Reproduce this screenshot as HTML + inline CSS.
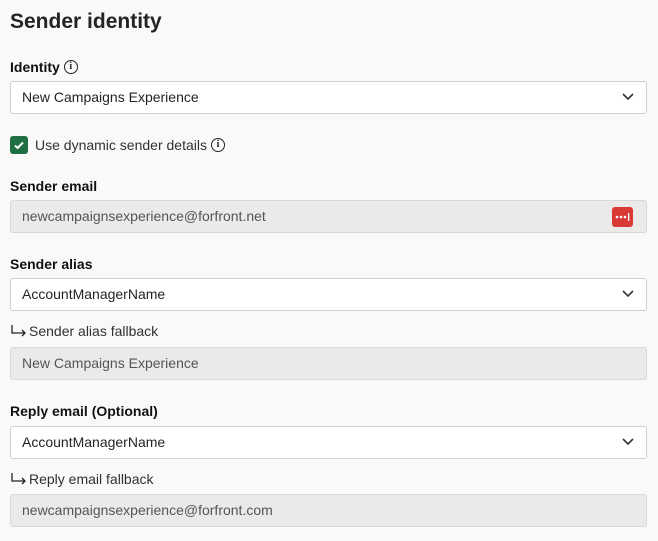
<!DOCTYPE html>
<html><head><style>
*{box-sizing:border-box;margin:0;padding:0}
body{width:658px;height:541px;background:#faf9f8;font-family:"Liberation Sans",sans-serif;color:#201f1e;position:relative;overflow:hidden}
.a{position:absolute}
h1{position:absolute;left:10px;top:10px;font-size:21px;font-weight:bold;color:#252423}
.lbl{position:absolute;left:10px;font-size:14px;font-weight:bold;color:#111;line-height:16px;display:flex;align-items:center}
.box{position:absolute;left:10px;width:637px;height:33px;border:1px solid #d2d0ce;border-radius:3px;background:#fff;font-size:14px;padding-left:11px;line-height:31px;color:#252423}
.dis{background:#ebeae9;color:#555;border-color:#dad8d6}
.chev{position:absolute;right:12px;top:11px}
.sub{position:absolute;left:10px;font-size:14px;color:#323130;line-height:16px;display:flex;align-items:center}
.info{display:inline-block;width:14px;height:14px;border:1.4px solid #222;border-radius:50%;font-size:10px;text-align:center;line-height:11px;font-weight:bold;margin-left:4px;font-family:"Liberation Serif",serif;color:#222}
</style></head><body>
<h1>Sender identity</h1>
<div class="lbl" style="top:59px">Identity<span class="info">i</span></div>
<div class="box" style="top:81px">New Campaigns Experience<svg class="chev" width="12" height="8" viewBox="0 0 12 8"><path d="M1 1l5 5 5-5" fill="none" stroke="#333" stroke-width="1.6"/></svg></div>
<div class="a" style="left:10px;top:136px;width:18px;height:18px;background:#1f6f43;border-radius:3px"><svg width="18" height="18" viewBox="0 0 18 18"><path d="M5 9.5l2.6 2.5L13 6.5" fill="none" stroke="#fff" stroke-width="2"/></svg></div>
<div class="sub" style="left:35px;top:137px">Use dynamic sender details<span class="info">i</span></div>
<div class="lbl" style="top:178px">Sender email</div>
<div class="box dis" style="top:200px">newcampaignsexperience@forfront.net<div class="a" style="left:601px;top:6px;width:21px;height:20px;background:#d93a36;border-radius:3px"><svg width="21" height="20" viewBox="0 0 21 20"><circle cx="5" cy="10" r="1.3" fill="#fff"/><circle cx="9" cy="10" r="1.3" fill="#fff"/><circle cx="13" cy="10" r="1.3" fill="#fff"/><rect x="16" y="6" width="1.3" height="8" fill="#fff"/></svg></div></div>
<div class="lbl" style="top:256px">Sender alias</div>
<div class="box" style="top:278px">AccountManagerName<svg class="chev" width="12" height="8" viewBox="0 0 12 8"><path d="M1 1l5 5 5-5" fill="none" stroke="#333" stroke-width="1.6"/></svg></div>
<div class="sub" style="top:323px"><svg width="18" height="14" viewBox="0 0 18 14" style="margin-right:1px"><path d="M2 1v8h13M12 6l3 3-3 3" fill="none" stroke="#222" stroke-width="1.3"/></svg>Sender alias fallback</div>
<div class="box dis" style="top:347px">New Campaigns Experience</div>
<div class="lbl" style="top:403px">Reply email (Optional)</div>
<div class="box" style="top:426px">AccountManagerName<svg class="chev" width="12" height="8" viewBox="0 0 12 8"><path d="M1 1l5 5 5-5" fill="none" stroke="#333" stroke-width="1.6"/></svg></div>
<div class="sub" style="top:471px"><svg width="18" height="14" viewBox="0 0 18 14" style="margin-right:1px"><path d="M2 1v8h13M12 6l3 3-3 3" fill="none" stroke="#222" stroke-width="1.3"/></svg>Reply email fallback</div>
<div class="box dis" style="top:494px">newcampaignsexperience@forfront.com</div>
</body></html>
